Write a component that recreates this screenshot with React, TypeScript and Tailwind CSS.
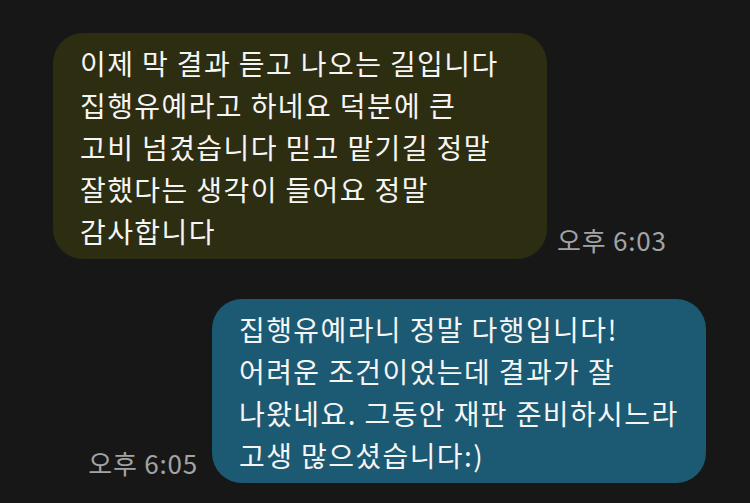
const FONT = "font-['Noto_Sans_CJK_KR','Noto_Sans',sans-serif]";

const MESSAGES: { side: "in" | "out"; lines: string[]; time: string }[] = [
  {
    side: "in",
    lines: [
      "이제 막 결과 듣고 나오는 길입니다",
      "집행유예라고 하네요 덕분에 큰",
      "고비 넘겼습니다 믿고 맡기길 정말",
      "잘했다는 생각이 들어요 정말",
      "감사합니다",
    ],
    time: "오후 6:03",
  },
  {
    side: "out",
    lines: [
      "집행유예라니 정말 다행입니다!",
      "어려운 조건이었는데 결과가 잘",
      "나왔네요. 그동안 재판 준비하시느라",
      "고생 많으셨습니다:)",
    ],
    time: "오후 6:05",
  },
];

const Bubble = ({ lines, side }: { lines: string[]; side: "in" | "out" }) => (
  <div
    className={`w-[494px] rounded-[30px] pl-[27px] pr-4 pt-[9px] pb-[7px] text-[28px] leading-[42px] tracking-[1.4px] text-[#f5f5f5] ${
      side === "in" ? "bg-[#2d2d11]" : "bg-[#1b5a72]"
    }`}
  >
    {lines.map((l) => (
      <div key={l} className="whitespace-nowrap">{l}</div>
    ))}
  </div>
);

const Time = ({ t }: { t: string }) => (
  <span className="text-[26px] leading-[30px] tracking-[0.8px] text-[#a3a3a3] whitespace-nowrap">{t}</span>
);

export default function App() {
  return (
    <div className={`w-[750px] h-[503px] bg-[#171717] overflow-hidden pt-[33px] ${FONT}`}>
      <div className="flex flex-col gap-[40px]">
        {MESSAGES.map((m) =>
          m.side === "in" ? (
            <div key={m.time} className="flex items-end gap-[10px] pl-[53px]">
              <Bubble lines={m.lines} side="in" />
              <div className="pb-[3px]"><Time t={m.time} /></div>
            </div>
          ) : (
            <div key={m.time} className="flex items-end justify-end gap-[14px] pr-[44px]">
              <div className="pb-[4px]"><Time t={m.time} /></div>
              <Bubble lines={m.lines} side="out" />
            </div>
          )
        )}
      </div>
    </div>
  );
}
